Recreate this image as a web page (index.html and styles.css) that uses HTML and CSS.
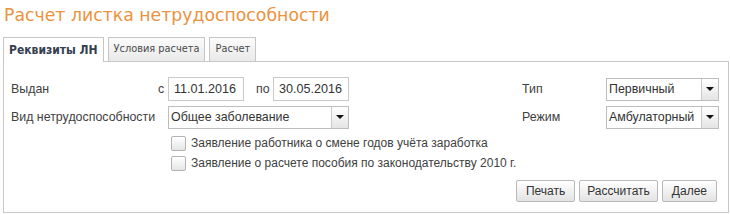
FILE: index.html
```html
<!DOCTYPE html>
<html lang="ru">
<head>
  <meta charset="UTF-8">
  <title>Расчет листка нетрудоспособности</title>
  <link rel="stylesheet" href="styles.css">
</head>
<body>
  <h1 class="title">Расчет листка нетрудоспособности</h1>

  <div class="tabs">
    <div class="tab active">Реквизиты ЛН</div>
    <div class="tab">Условия расчета</div>
    <div class="tab">Расчет</div>
  </div>

  <div class="panel">
    <div class="row">
      <span class="label">Выдан</span>
      <span class="pre">с</span>
      <input class="field date" type="text" value="11.01.2016">
      <span class="pre pre-to">по</span>
      <input class="field date" type="text" value="30.05.2016">
      <div class="side">
        <span class="side-label">Тип</span>
        <div class="combo combo-small">
          <span class="combo-text">Первичный</span>
          <span class="combo-btn"><i class="arrow"></i></span>
        </div>
      </div>
    </div>

    <div class="row">
      <span class="label label-wide">Вид нетрудоспособности</span>
      <div class="combo combo-wide">
        <span class="combo-text">Общее заболевание</span>
        <span class="combo-btn"><i class="arrow"></i></span>
      </div>
      <div class="side">
        <span class="side-label">Режим</span>
        <div class="combo combo-small">
          <span class="combo-text">Амбулаторный</span>
          <span class="combo-btn"><i class="arrow"></i></span>
        </div>
      </div>
    </div>

    <label class="check">
      <input type="checkbox">
      <span>Заявление работника о смене годов учёта заработка</span>
    </label>
    <label class="check">
      <input type="checkbox">
      <span>Заявление о расчете пособия по законодательству 2010 г.</span>
    </label>

    <div class="actions">
      <button class="btn">Печать</button>
      <button class="btn btn-wide">Рассчитать</button>
      <button class="btn">Далее</button>
    </div>
  </div>
</body>
</html>
```

FILE: styles.css
```css
* {
  margin: 0;
  padding: 0;
  box-sizing: border-box;
}

body {
  font-family: 'Liberation Sans', Arial, sans-serif;
  font-size: 12.4px;
  color: #404040;
  background: #fff;
  padding: 0 1px 0 3px;
}

.title {
  font-family: 'DejaVu Sans', Verdana, sans-serif;
  font-size: 17.3px;
  font-weight: normal;
  color: #eb9240;
  height: 37px;
  padding: 3px 0 0 1px;
  line-height: 24px;
}

/* Tabs */
.tabs {
  display: flex;
  gap: 4px;
  height: 24px;
  position: relative;
  z-index: 1;
}

.tab {
  font-family: 'DejaVu Sans Condensed', Tahoma, sans-serif;
  font-size: 10.9px;
  color: #4a4a4a;
  height: 24px;
  line-height: 22px;
  padding: 0 5px;
  border: 1px solid #c6c6c6;
  border-bottom: none;
  background: linear-gradient(#fbfbfb, #e9e9e9);
}

.tab.active {
  font-size: 12px;
  font-weight: bold;
  color: #34404f;
  background: #fff;
  height: 25px;
  padding: 1px 5px 0;
}

/* Panel */
.panel {
  border: 1px solid #c8c8c8;
  padding: 15px 9px 8px 7px;
  height: 152px;
}

.row {
  display: flex;
  align-items: center;
  height: 24px;
  margin-bottom: 4px;
}

.label {
  width: 147px;
}

.label-wide {
  width: 157px;
}

.pre {
  width: 10px;
}

.pre-to {
  width: 17px;
  margin-left: 12px;
}

.field {
  font-family: inherit;
  font-size: 12.6px;
  color: #333;
  height: 24px;
  border: 1px solid #c9c9c9;
  padding: 0 5px;
  outline: none;
}

.date {
  width: 76px;
}

.side {
  display: flex;
  align-items: center;
  margin-left: auto;
}

.side-label {
  width: 84px;
}

/* Combo box */
.combo {
  display: flex;
  height: 23px;
  border: 1px solid #bdbdbd;
  background: #fff;
}

.combo-small {
  width: 113px;
}

.combo-wide {
  width: 181px;
}

.combo-text {
  flex: 1;
  font-size: 12.4px;
  line-height: 21px;
  padding-left: 2px;
  color: #333;
  white-space: nowrap;
  overflow: hidden;
}

.combo-btn {
  width: 17px;
  border-left: 1px solid #c9c9c9;
  background: linear-gradient(#ffffff, #e4e4e4);
  display: flex;
  align-items: center;
  justify-content: center;
}

.arrow {
  width: 0;
  height: 0;
  border-left: 4px solid transparent;
  border-right: 4px solid transparent;
  border-top: 4px solid #111;
}

/* Checkboxes */
.check {
  display: flex;
  align-items: center;
  height: 20px;
  margin-left: 160px;
  font-size: 12px;
}

.check input {
  appearance: none;
  width: 15px;
  height: 15px;
  border: 1px solid #b3b3b3;
  border-radius: 2px;
  background: linear-gradient(#ffffff, #e5e5e5);
  margin-right: 5px;
}

/* Buttons */
.actions {
  display: flex;
  justify-content: flex-end;
  gap: 4px;
  margin-top: 7px;
  margin-right: 2px;
}

.btn {
  font-family: inherit;
  font-size: 12px;
  color: #333;
  height: 22px;
  padding: 0 9px;
  border: 1px solid #b9b9b9;
  border-radius: 2px;
  background: linear-gradient(#ffffff, #e3e3e3);
}

.btn-wide {
  padding: 0 7px;
}
```
